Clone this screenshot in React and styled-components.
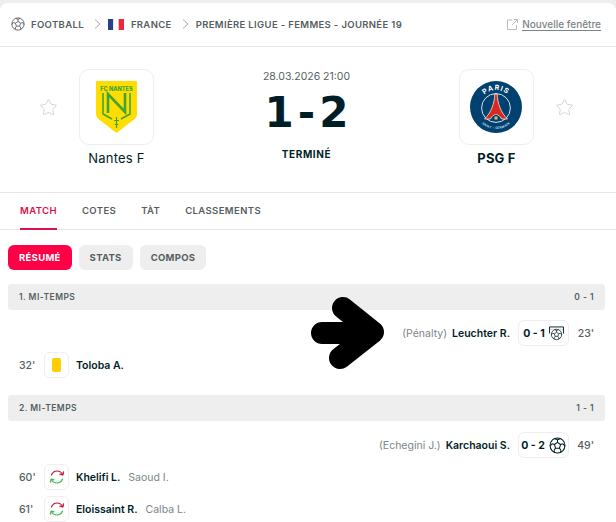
import React from "react";
import styled, { createGlobalStyle } from "styled-components";
import { Star } from "lucide-react";

const GlobalStyle = createGlobalStyle`
  html, body {
    margin: 0;
    padding: 0;
    background: #eeeeee;
    font-family: Inter, "Noto Sans", sans-serif;
    color: #001e28;
  }
`;

const Page = styled.div`
  width: 616px;
  height: 522px;
  overflow: hidden;
  position: relative;
  padding-top: 3px;
  box-sizing: border-box;
`;

const Card = styled.div`
  background: #fff;
  border-radius: 8px 8px 0 0;
  height: 519px;
`;

const Breadcrumb = styled.div`
  height: 42px;
  padding: 0 11px 1px;
  display: flex;
  align-items: center;
  border-bottom: 1px solid #e8e8e8;
  font-size: 9.5px;
  font-weight: 600;
  letter-spacing: 0.35px;
  color: #555e61;
  text-transform: uppercase;
`;

const Crumb = styled.span`
  margin-left: ${(p) => p.$gap || 0}px;
  white-space: nowrap;
`;

const Chevron = styled.svg`
  width: 7px;
  height: 10px;
  margin-left: 10px;
  fill: none;
  stroke: #a8aeb0;
  stroke-width: 1;
`;

const Flag = styled.svg`
  width: 16px;
  height: 11px;
  margin-left: 7px;
`;

const NewWindow = styled.a`
  margin-left: auto;
  margin-right: 4px;
  display: flex;
  align-items: center;
  gap: 4px;
  font-size: 10px;
  font-weight: 500;
  letter-spacing: 0;
  text-transform: none;
  color: #7c8588;
  text-decoration: underline;
  text-underline-offset: 2px;
`;

const MatchHeader = styled.div`
  height: 146px;
  box-sizing: border-box;
  display: flex;
  justify-content: space-between;
  padding: 22px 42px 0 39px;
  border-bottom: 1px solid #e8e8e8;
`;

const TeamSide = styled.div`
  display: flex;
  flex-direction: ${(p) => (p.$away ? "row-reverse" : "row")};
  gap: 21px;
`;

const FavStar = styled(Star)`
  width: 19px;
  height: 19px;
  margin-top: 29px;
  color: #cfd2d3;
  stroke-width: 1.2;
`;

const TeamColumn = styled.div`
  width: 75px;
  display: flex;
  flex-direction: column;
  align-items: center;
`;

const LogoBox = styled.div`
  width: 75px;
  height: 76px;
  box-sizing: border-box;
  border: 1px solid #eeeeee;
  border-radius: 10px;
  display: flex;
  align-items: center;
  justify-content: center;
`;

const TeamName = styled.div`
  margin-top: 5px;
  font-size: 13px;
  line-height: 16px;
  letter-spacing: 0.2px;
  white-space: nowrap;
  font-weight: ${(p) => (p.$winner ? 700 : 400)};
`;

const ScoreColumn = styled.div`
  display: flex;
  flex-direction: column;
  align-items: center;
  padding-top: 1px;
`;

const DateTime = styled.div`
  font-size: 10.5px;
  line-height: 14px;
  color: #555e61;
`;

const Score = styled.div`
  margin-top: 4px;
  font-family: "DejaVu Sans", sans-serif;
  font-weight: 700;
  font-size: 42px;
  line-height: 50px;
  color: #001e28;
  display: flex;
  gap: 4px;
`;

const Status = styled.div`
  margin-top: 9px;
  font-size: 10px;
  line-height: 14px;
  font-weight: 700;
  letter-spacing: 0.6px;
`;

const Tabs = styled.div`
  height: 36px;
  display: flex;
  padding-left: 20px;
  gap: 25px;
  border-bottom: 1px solid #e8e8e8;
`;

const Tab = styled.div`
  font-size: 9.5px;
  font-weight: 600;
  letter-spacing: 0.4px;
  line-height: 36px;
  height: ${(p) => (p.$active ? 35 : 36)}px;
  color: ${(p) => (p.$active ? "#dc0f4c" : "#555e61")};
  border-bottom: ${(p) => (p.$active ? "2px solid #dc0f4c" : "none")};
`;

const Pills = styled.div`
  display: flex;
  gap: 7px;
  padding: 15px 8px 14px;
`;

const Pill = styled.div`
  height: 25px;
  padding: 0 11px 1px;
  box-sizing: border-box;
  border-radius: 6px;
  display: flex;
  align-items: center;
  font-size: 9.5px;
  font-weight: 700;
  letter-spacing: 0.3px;
  background: ${(p) => (p.$active ? "#ff0046" : "#eeeeee")};
  color: ${(p) => (p.$active ? "#fff" : "#555e61")};
`;

const Summary = styled.div`
  width: 597px;
  margin-left: 8px;
`;

const SectionHeader = styled.div`
  height: 26px;
  border-radius: 3px;
  background: #eeeeee;
  display: flex;
  align-items: center;
  justify-content: space-between;
  padding: 0 11px;
  font-size: 8.5px;
  font-weight: 600;
  letter-spacing: 0.45px;
  color: #555e61;
`;

const Rows = styled.div`
  padding: ${(p) => p.$top}px 0 ${(p) => p.$bottom}px;
  display: flex;
  flex-direction: column;
  gap: 6px;
`;

const Row = styled.div`
  height: 26px;
  display: flex;
  align-items: center;
  padding: 0 11px;
  justify-content: ${(p) => (p.$away ? "flex-end" : "flex-start")};
  font-size: 10.5px;
`;

const Minute = styled.span`
  width: 25px;
  font-weight: 500;
  color: #555e61;
  text-align: ${(p) => (p.$away ? "right" : "left")};
`;

const IconBox = styled.div`
  width: 25px;
  height: 26px;
  box-sizing: border-box;
  border: 1px solid #eeeeee;
  border-radius: 6px;
  display: flex;
  align-items: center;
  justify-content: center;
  margin-right: 7px;
`;

const ScoreBadge = styled.div`
  height: 26px;
  width: 51px;
  box-sizing: border-box;
  border: 1px solid #eeeeee;
  border-radius: 6px;
  display: flex;
  align-items: center;
  justify-content: center;
  gap: 4px;
  margin-left: 8px;
  font-weight: 700;
`;

const CardMark = styled.div`
  width: 9px;
  height: 14px;
  border-radius: 2px;
  background: #ffcd00;
`;

const Player = styled.span`
  font-weight: 600;
`;

const Assist = styled.span`
  color: #7c8588;
  font-size: 10.5px;
  margin: ${(p) => (p.$after ? "0 0 0 8px" : "0 5px 0 0")};
`;

const ScrawlArrow = styled.svg`
  position: absolute;
  left: 305px;
  top: 290px;
  width: 90px;
  height: 85px;
  pointer-events: none;
`;

// ball drawn by hand, the icon packs have a heavier pattern
const BallPattern = ({ color }) => (
  <g fill="none" stroke={color} strokeWidth="1">
    <circle cx="8" cy="8" r="7" />
    <path d="M8 5L10.9 7.1L9.8 10.5H6.2L5.1 7.1Z" />
    <path d="M8 5V2.6M10.9 7.1L13.3 6.3M9.8 10.5L11.2 12.5M6.2 10.5L4.8 12.5M5.1 7.1L2.7 6.3" />
    <path d="M5.3 1.6L8 2.6L10.7 1.6M13.3 6.3L14.9 8.6M11.2 12.5L10.9 14.4M4.8 12.5L5.1 14.4M2.7 6.3L1.1 8.6" />
  </g>
);

const BallIcon = ({ size, color }) => (
  <svg width={size} height={size} viewBox="0 0 16 16">
    <BallPattern color={color} />
  </svg>
);

const NantesLogo = () => (
  <svg width="41" height="52" viewBox="0 0 41 52">
    <path d="M1 0H40Q41 0 41 1V33C41 36 39 38 36 40L20.5 52L5 40C2 38 0 36 0 33V1Q0 0 1 0Z" fill="#ffdd00" />
    <text x="20.5" y="9.5" textAnchor="middle" fontSize="5.6" fontWeight="800" fill="#3fa535" fontFamily="Inter">
      FC NANTES
    </text>
    <g fill="none" stroke="#3fa535">
      <path d="M7 12V33L16 38" strokeWidth="1.6" />
      <path d="M34 12V33L25 38" strokeWidth="1.6" />
      <path d="M12 32V13L29 31V12" strokeWidth="2.6" />
    </g>
    <path d="M20.5 36V47M18 39.5H23M18.8 43.5H22.2" stroke="#3fa535" strokeWidth="1.2" />
  </svg>
);

const PsgLogo = () => (
  <svg width="52" height="52" viewBox="0 0 52 52">
    <circle cx="26" cy="26" r="26" fill="#004170" />
    <circle cx="26" cy="27" r="14.4" fill="none" stroke="#d8e2ea" strokeWidth="1" />
    <path id="psgTop" d="M9 26A17 17 0 0 1 43 26" fill="none" />
    <path id="psgBottom" d="M5 27A21 21 0 0 0 47 27" fill="none" />
    <text fontSize="7" fontWeight="700" fill="#fff" fontFamily="Inter" letterSpacing="1">
      <textPath href="#psgTop" startOffset="50%" textAnchor="middle">
        PARIS
      </textPath>
    </text>
    <text fontSize="3" fontWeight="600" fill="#dbe5ec" fontFamily="Inter" letterSpacing="0.3">
      <textPath href="#psgBottom" startOffset="50%" textAnchor="middle">
        SAINT - GERMAIN
      </textPath>
    </text>
    <path
      d="M24.8 13H27.2C27.4 22 31 32 37.5 38H31.5C30 35 28 33.5 26 33.5C24 33.5 22 35 20.5 38H14.5C21 32 24.6 22 24.8 13Z"
      fill="#da291c"
      stroke="#fff"
      strokeWidth="0.7"
    />
    <path d="M26 33.5C24.3 34.5 23.3 36.5 23.3 39H28.7C28.7 36.5 27.7 34.5 26 33.5Z" fill="#004170" />
    <path d="M24.5 35.5H27.5V38.5H24.5Z" fill="#d9bd6a" />
  </svg>
);

const GoalIcon = () => (
  <svg width="15" height="15" viewBox="0 0 16 16">
    <path d="M0.5 8V1H15.5V8" fill="none" stroke="#001e28" strokeWidth="1" />
    <path d="M1 3.5H15" stroke="#9aa1a4" strokeWidth="0.6" />
    <circle cx="8" cy="9" r="6.6" fill="#fff" />
    <g transform="translate(1.7 2.7) scale(0.79)">
      <BallPattern color="#001e28" />
    </g>
  </svg>
);

const SwapIcon = () => (
  <svg width="16" height="16" viewBox="0 0 16 16" fill="none" strokeWidth="1.2" strokeLinecap="round" strokeLinejoin="round">
    <path d="M2.5 6C3.5 3.5 5.5 2 8 2C10.5 2 12.5 3.3 13.7 5.5" stroke="#c8102e" />
    <path d="M14.5 2.8L13.9 5.8L10.9 5.1" stroke="#c8102e" />
    <path d="M13.5 10C12.5 12.5 10.5 14 8 14C5.5 14 3.5 12.7 2.3 10.5" stroke="#3fb54a" />
    <path d="M1.5 13.2L2.1 10.2L5.1 10.9" stroke="#3fb54a" />
  </svg>
);

const ExternalIcon = () => (
  <svg width="11" height="11" viewBox="0 0 11 11" fill="none" stroke="#b0b5b7" strokeWidth="0.9">
    <path d="M5 1H0.5V10.5H9.5V6" />
    <path d="M5 6L10 1M7 0.5H10.5V4" />
  </svg>
);

const Sep = () => (
  <Chevron viewBox="0 0 7 10">
    <path d="M1 0.5L6 5L1 9.5" />
  </Chevron>
);

const Sub = ({ minute, on, off }) => (
  <Row>
    <Minute>{minute}</Minute>
    <IconBox>
      <SwapIcon />
    </IconBox>
    <Player>{on}</Player>
    <Assist $after>{off}</Assist>
  </Row>
);

const App = () => {
  return (
    <Page>
      <GlobalStyle />
      <Card>
        <Breadcrumb>
          <BallIcon size={14} color="#555e61" />
          <Crumb $gap={6}>Football</Crumb>
          <Sep />
          <Flag viewBox="0 0 3 2" preserveAspectRatio="none">
            <rect width="1" height="2" fill="#27408b" />
            <rect x="1" width="1" height="2" fill="#fff" />
            <rect x="2" width="1" height="2" fill="#ed2939" />
          </Flag>
          <Crumb $gap={7}>France</Crumb>
          <Sep />
          <Crumb $gap={7}>Première Ligue - Femmes - Journée 19</Crumb>
          <NewWindow>
            <ExternalIcon />
            Nouvelle fenêtre
          </NewWindow>
        </Breadcrumb>

        <MatchHeader>
          <TeamSide>
            <FavStar />
            <TeamColumn>
              <LogoBox>
                <NantesLogo />
              </LogoBox>
              <TeamName>Nantes F</TeamName>
            </TeamColumn>
          </TeamSide>
          <ScoreColumn>
            <DateTime>28.03.2026 21:00</DateTime>
            <Score>
              <span>1</span>
              <span>-</span>
              <span>2</span>
            </Score>
            <Status>TERMINÉ</Status>
          </ScoreColumn>
          <TeamSide $away>
            <FavStar />
            <TeamColumn>
              <LogoBox>
                <PsgLogo />
              </LogoBox>
              <TeamName $winner>PSG F</TeamName>
            </TeamColumn>
          </TeamSide>
        </MatchHeader>

        <Tabs>
          <Tab $active>MATCH</Tab>
          <Tab>COTES</Tab>
          <Tab>TÀT</Tab>
          <Tab>CLASSEMENTS</Tab>
        </Tabs>

        <Pills>
          <Pill $active>RÉSUMÉ</Pill>
          <Pill>STATS</Pill>
          <Pill>COMPOS</Pill>
        </Pills>

        <Summary>
          <SectionHeader>
            <span>1. MI-TEMPS</span>
            <span>0 - 1</span>
          </SectionHeader>
          <Rows $top={10} $bottom={17}>
            <Row $away>
              <Assist>(Pénalty)</Assist>
              <Player>Leuchter R.</Player>
              <ScoreBadge>
                0 - 1
                <GoalIcon />
              </ScoreBadge>
              <Minute $away>23'</Minute>
            </Row>
            <Row>
              <Minute>32'</Minute>
              <IconBox>
                <CardMark />
              </IconBox>
              <Player>Toloba A.</Player>
            </Row>
          </Rows>
          <SectionHeader>
            <span>2. MI-TEMPS</span>
            <span>1 - 1</span>
          </SectionHeader>
          <Rows $top={11} $bottom={0}>
            <Row $away>
              <Assist>(Echegini J.)</Assist>
              <Player>Karchaoui S.</Player>
              <ScoreBadge>
                0 - 2
                <BallIcon size={17} color="#001e28" />
              </ScoreBadge>
              <Minute $away>49'</Minute>
            </Row>
            <Sub minute="60'" on="Khelifi L." off="Saoud I." />
            <Sub minute="61'" on="Eloissaint R." off="Calba L." />
          </Rows>
        </Summary>
      </Card>

      <ScrawlArrow viewBox="305 290 90 85">
        <path
          d="M322 333H372M343 308L373 332L340 358"
          fill="none"
          stroke="#000"
          strokeWidth="22"
          strokeLinecap="round"
          strokeLinejoin="round"
        />
      </ScrawlArrow>
    </Page>
  );
};

export default App;
